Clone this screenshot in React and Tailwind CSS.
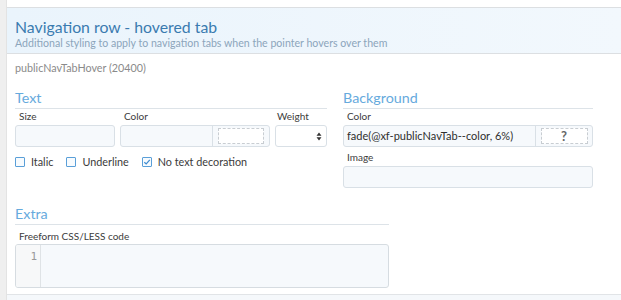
import React from "react";

const font = { fontFamily: 'Lato, "Open Sans", sans-serif' };

const Checkbox = ({ checked, label }) => (
  <label className="flex items-center gap-[6px] text-[10.8px] text-[#3a3a3a] leading-[14px]">
    <span className="w-[10px] h-[10px] border border-[#5a9fd8] rounded-[1px] bg-[#f7fbfe] flex items-center justify-center">
      {checked && (
        <svg width="8" height="8" viewBox="0 0 8 8">
          <path d="M1.3 4.2 L3.2 6 L6.8 1.8" fill="none" stroke="#3d8bd0" strokeWidth="1.2" />
        </svg>
      )}
    </span>
    {label}
  </label>
);

const Label = ({ children, className = "" }) => (
  <div className={`text-[10px] leading-[12px] text-[#3c3c3c] ${className}`}>{children}</div>
);

const Heading = ({ children }) => (
  <div className="text-[14.3px] leading-[18px] text-[#66aadd] pb-px border-b border-[#dde3e8]">
    {children}
  </div>
);

const inputCls = "h-[22px] bg-[#f6f9fc] border border-[#d9e0e6] rounded-[3px]";

export default function App() {
  return (
    <div className="w-[621px] h-[300px] bg-[#efefef] pl-[6px] flex overflow-hidden" style={font}>
      <div className="flex-1 bg-white border-l border-[#e3e3e3] flex flex-col">
        <div className="h-[7px] shrink-0" />

        {/* Header */}
        <div className="border-y border-[#dcdfe2] bg-gradient-to-r from-[#eaf4fc] to-[#f2f8fd] pl-[8px] pt-[8px] pb-[3px]">
          <h1 className="text-[15.8px] leading-[21px] text-[#3a7bb0]">Navigation row - hovered tab</h1>
          <p className="text-[10.6px] leading-[13px] text-[#8ca5bb]">
            Additional styling to apply to navigation tabs when the pointer hovers over them
          </p>
        </div>

        {/* Body */}
        <div className="px-[8px] pt-[7px]">
          <div className="text-[10.75px] leading-[14px] text-[#8a8a8a]">publicNavTabHover (20400)</div>

          <div className="flex gap-[16px] mt-[14px]">
            {/* Text */}
            <div className="w-[312px]">
              <Heading>Text</Heading>
              <div className="flex gap-[5px] mt-px">
                <div className="w-[100px]">
                  <Label className="pl-[4px]">Size</Label>
                  <div className={`${inputCls} mt-[3px]`} />
                </div>
                <div className="w-[150px]">
                  <Label className="pl-[4px]">Color</Label>
                  <div className={`${inputCls} mt-[3px] flex`}>
                    <div className="flex-1" />
                    <div className="w-[57px] border-l border-[#d9e0e6] flex items-center justify-center">
                      <div className="w-[46px] h-[16px] bg-white border border-dashed border-[#c8cdd2]" />
                    </div>
                  </div>
                </div>
                <div className="w-[52px]">
                  <Label className="pl-[2px]">Weight</Label>
                  <div className={`${inputCls} mt-[3px] flex items-center justify-end pr-[4px] bg-white`}>
                    <svg width="6" height="9" viewBox="0 0 6 9">
                      <path d="M3 0.5 L5.5 3.7 L0.5 3.7 Z M3 8.5 L5.5 5.3 L0.5 5.3 Z" fill="#333" />
                    </svg>
                  </div>
                </div>
              </div>
              <div className="flex gap-[13px] mt-[8px]">
                <Checkbox label="Italic" />
                <Checkbox label="Underline" />
                <Checkbox checked label="No text decoration" />
              </div>
            </div>

            {/* Background */}
            <div className="w-[250px]">
              <Heading>Background</Heading>
              <Label className="pl-[4px] mt-px">Color</Label>
              <div className={`${inputCls} mt-[3px] flex`}>
                <div className="flex-1 pl-[3px] text-[11px] leading-[20px] text-[#2e2e2e] whitespace-nowrap overflow-hidden">
                  fade(@xf-publicNavTab--color, 6%)
                </div>
                <div className="w-[57px] border-l border-[#d9e0e6] flex items-center justify-center">
                  <div className="w-[47px] h-[16px] bg-white border border-dashed border-[#c8cdd2] flex items-center justify-center text-[13px] font-bold text-[#666] leading-none">
                    ?
                  </div>
                </div>
              </div>
              <Label className="pl-[4px] mt-[4px]">Image</Label>
              <div className={`${inputCls} mt-[3px] h-[21px]`} />
            </div>
          </div>

          {/* Extra */}
          <div className="w-[374px] mt-[17px]">
            <Heading>Extra</Heading>
            <Label className="pl-[4px] mt-[5px]">Freeform CSS/LESS code</Label>
            <div className="mt-[2px] h-[44px] flex bg-[#f6f9fc] border border-[#d6dce1] rounded-[3px] overflow-hidden">
              <div
                className="w-[25px] bg-[#f7f8f9] border-r border-[#dfe3e6] text-right pr-[3px] pt-[5px] text-[11px] leading-[14px] text-[#999]"
                style={{ fontFamily: '"DejaVu Sans Mono", monospace' }}
              >
                1
              </div>
              <div className="flex-1" />
            </div>
          </div>
        </div>

        {/* Footer */}
        <div className="mt-[6px] flex-1 border-t border-[#e1e4e7] bg-[#f5f8fb]" />
      </div>
    </div>
  );
}
